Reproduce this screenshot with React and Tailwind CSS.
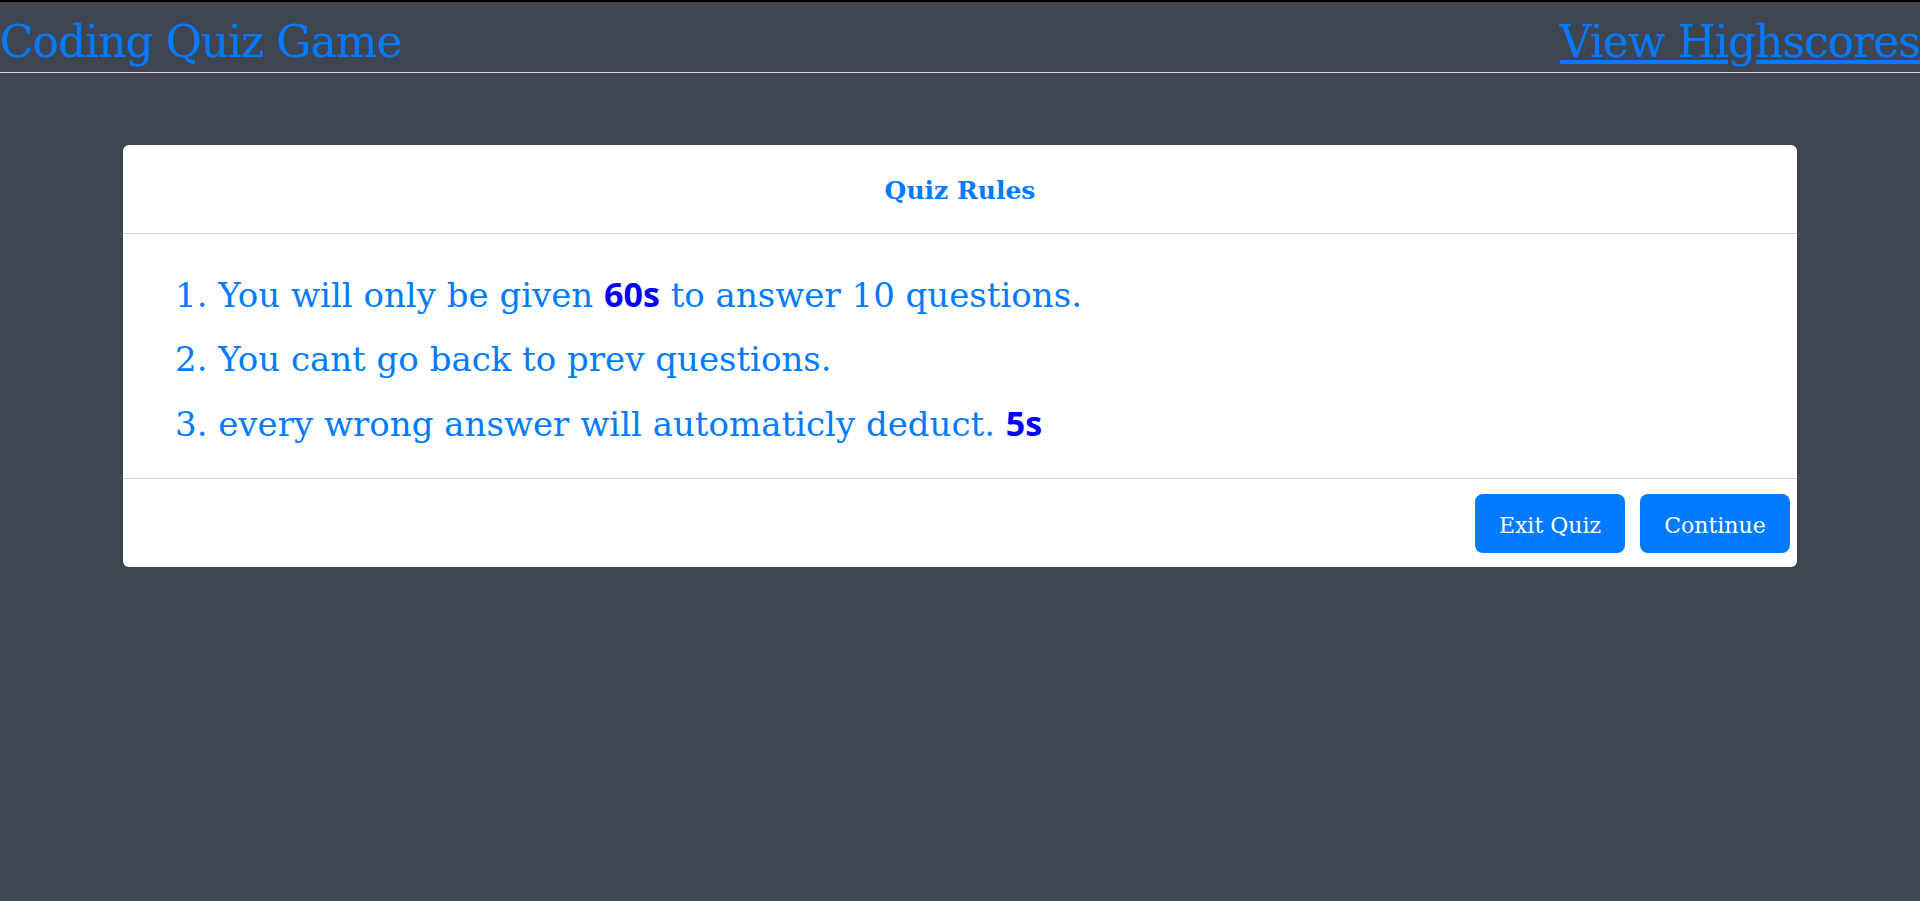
export default function App() {
  const serif = { fontFamily: '"DejaVu Serif", serif' };
  const sans = { fontFamily: '"Open Sans", sans-serif' };
  return (
    <div className="min-h-screen w-full bg-[#3f4651] border-t-2 border-black" style={serif}>
      <header className="flex items-center justify-between h-[71px] border-b border-[#d6d6d6]">
        <a className="text-[44px] tracking-[-1px] text-[#007bff] leading-none pt-[9px]">Coding Quiz Game</a>
        <a href="#" className="text-[44px] tracking-[-1px] text-[#007bff] underline leading-none pt-[9px]">View Highscores</a>
      </header>

      <div className="pt-[72px] px-[123px]">
        <div className="bg-white rounded-[6px] flex flex-col">
          <div className="h-[89px] flex items-center justify-center border-b border-[#d4d4d4]">
            <h2 className="text-[25px] font-bold text-[#007bff] pt-[4px]">Quiz Rules</h2>
          </div>

          <div className="pt-[28px] pb-[22px] pl-[52px] text-[34px] leading-[64px] text-[#007bff]">
            <div>
              1. You will only be given{" "}
              <b className="text-[#0000ff]" style={sans}>60s</b> to answer 10 questions.
            </div>
            <div>2. You cant go back to prev questions.</div>
            <div>
              3. every wrong answer will automaticly deduct.{" "}
              <b className="text-[#0000ff]" style={sans}>5s</b>
            </div>
          </div>

          <div className="border-t border-[#d4d4d4] flex justify-end gap-[15px] pt-[15px] pb-[14px] pr-[7px]">
            <button className="w-[150px] h-[59px] rounded-[8px] bg-[#007bff] text-white text-[22px] pt-[4px]">Exit Quiz</button>
            <button className="w-[150px] h-[59px] rounded-[8px] bg-[#007bff] text-white text-[22px] pt-[4px]">Continue</button>
          </div>
        </div>
      </div>
    </div>
  );
}
